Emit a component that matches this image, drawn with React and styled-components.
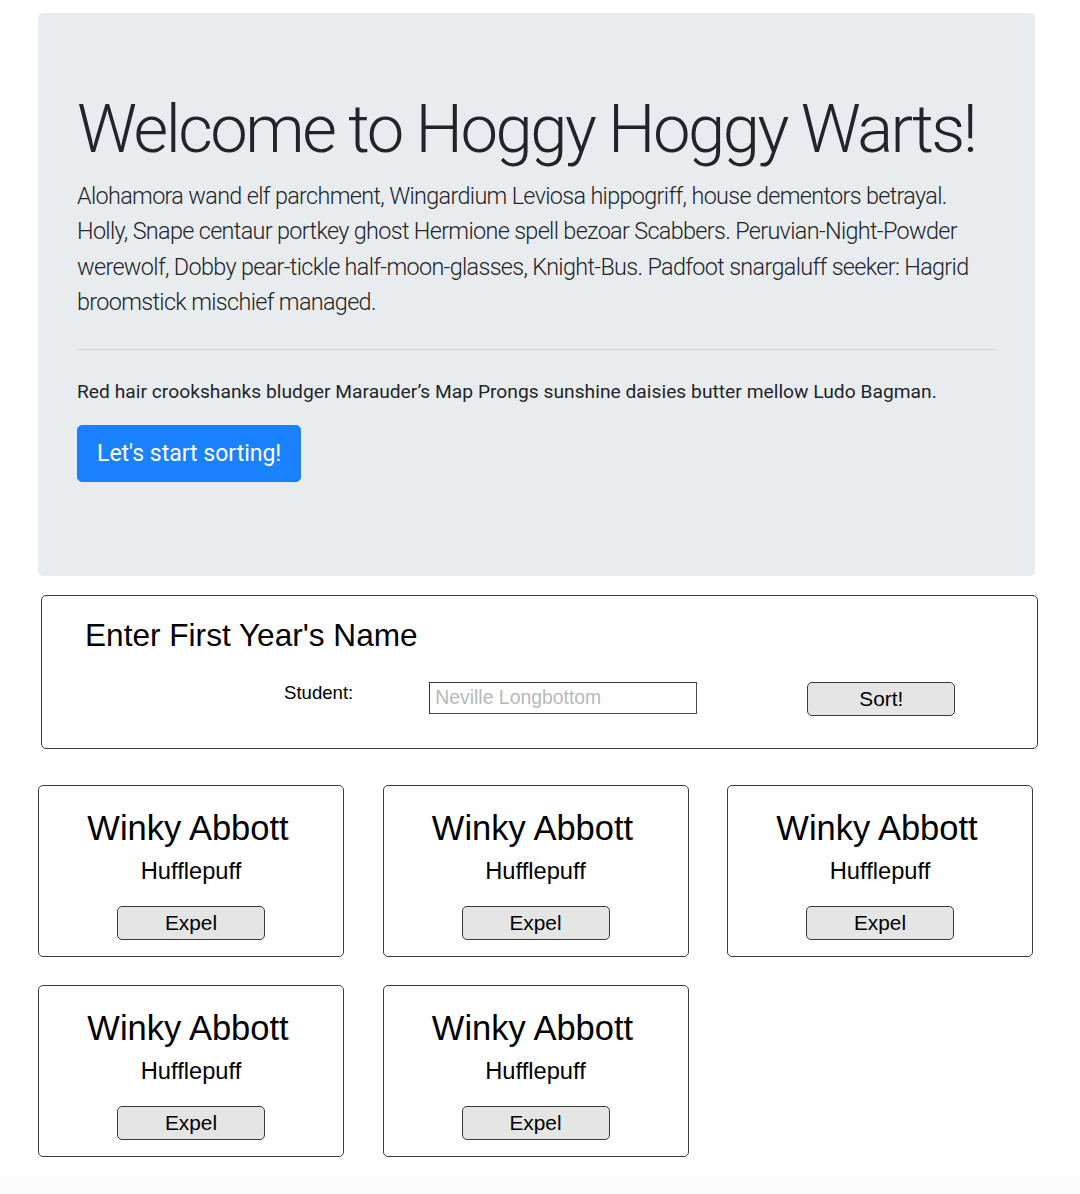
import React from "react";
import styled, { createGlobalStyle } from "styled-components";

const Global = createGlobalStyle`
  html, body { margin: 0; padding: 0; background: #fff; }
  body { font-family: "Liberation Sans", Arial, sans-serif; color: #000; }
  * { box-sizing: border-box; }
`;

const Page = styled.div`
  padding-top: 13px;
`;

const Jumbotron = styled.section`
  margin: 0 45px 0 38px;
  padding: 76px 39px 94px 39px;
  background: #e9ecef;
  border-radius: 5px;
  font-family: Roboto, Inter, sans-serif;
  color: #212529;
`;

const Title = styled.h1`
  margin: 0 0 9.5px;
  font-size: 67px;
  font-weight: 300;
  line-height: 1.2;
  letter-spacing: -2.5px;
  white-space: nowrap;
`;

const Lead = styled.p`
  margin: 0 0 19px;
  font-size: 23.4px;
  font-weight: 300;
  line-height: 35.5px;
  letter-spacing: -0.66px;
`;

const Rule = styled.hr`
  margin: 28px 0;
  border: 0;
  border-top: 1px solid rgba(0, 0, 0, 0.1);
`;

const Small = styled.p`
  margin: 0 0 19px;
  font-size: 19.2px;
  font-weight: 400;
  line-height: 28.5px;
  letter-spacing: 0.03px;
`;

const PrimaryButton = styled.button`
  display: inline-block;
  padding: 9.5px 19px;
  font-family: Roboto, Inter, sans-serif;
  font-size: 23px;
  font-weight: 400;
  line-height: 35.5px;
  color: #fff;
  background: #1a82ff;
  border: 1px solid #1a82ff;
  border-radius: 5px;
  cursor: pointer;
`;

const FormBox = styled.section`
  margin: 19px 42px 0 41px;
  padding: 21px 43px 32px;
  border: 1px solid #3c3c3c;
  border-radius: 5px;
`;

const FormTitle = styled.h2`
  margin: 0 0 29px;
  font-size: 31.6px;
  font-weight: 400;
  line-height: 36px;
`;

const FormRow = styled.div`
  display: flex;
  align-items: flex-start;
  padding-left: 199px;
`;

const Label = styled.label`
  font-size: 18.6px;
  line-height: 22px;
  margin-right: 76px;
`;

const TextInput = styled.input`
  width: 268px;
  height: 32px;
  margin-right: 110px;
  padding: 2px 5px;
  font-family: "Liberation Sans", Arial, sans-serif;
  font-size: 19.4px;
  border: 1px solid #4a4a4a;
  border-top-color: #333;
  border-left-color: #333;
  border-radius: 0;
  background: #fff;
  &::placeholder { color: #b8b8b8; }
`;

const GreyButton = styled.button`
  width: 148px;
  height: 34px;
  padding: 0;
  font-family: "Liberation Sans", Arial, sans-serif;
  font-size: 20.8px;
  line-height: 32px;
  color: #000;
  background: #e5e5e5;
  border: 1px solid #3a3a3a;
  border-radius: 5px;
  cursor: pointer;
`;

const Grid = styled.div`
  display: grid;
  grid-template-columns: repeat(3, 306px);
  column-gap: 38.5px;
  row-gap: 28px;
  margin: 36px 0 0 38px;
`;

const Card = styled.div`
  height: 172px;
  padding: 22px 0 0;
  border: 1px solid #3c3c3c;
  border-radius: 5px;
  display: flex;
  flex-direction: column;
  align-items: center;
  text-align: center;
`;

const Name = styled.div`
  font-size: 34.5px;
  line-height: 40px;
  margin-bottom: 10px;
  margin-right: 6px;
`;

const House = styled.div`
  font-size: 23.7px;
  line-height: 27px;
  margin-bottom: 21px;
`;

const FooterBand = styled.div`
  margin-top: 19px;
  height: 18px;
  background: #fbfbfb;
`;

const students = Array.from({ length: 5 }, (_, i) => ({
  id: i,
  name: "Winky Abbott",
  house: "Hufflepuff",
}));

export default function App() {
  return (
    <>
      <Global />
      <Page>
        <Jumbotron>
          <Title>Welcome to Hoggy Hoggy Warts!</Title>
          <Lead>
            Alohamora wand elf parchment, Wingardium Leviosa hippogriff, house
            dementors betrayal. Holly, Snape centaur portkey ghost Hermione spell
            bezoar Scabbers. Peruvian-Night-Powder werewolf, Dobby pear-tickle
            half-moon-glasses, Knight-Bus. Padfoot snargaluff seeker: Hagrid
            broomstick mischief managed.
          </Lead>
          <Rule />
          <Small>
            Red hair crookshanks bludger Marauder’s Map Prongs sunshine daisies
            butter mellow Ludo Bagman.
          </Small>
          <PrimaryButton>Let's start sorting!</PrimaryButton>
        </Jumbotron>

        <FormBox>
          <FormTitle>Enter First Year's Name</FormTitle>
          <FormRow>
            <Label htmlFor="student">Student:</Label>
            <TextInput id="student" placeholder="Neville Longbottom" />
            <GreyButton>Sort!</GreyButton>
          </FormRow>
        </FormBox>

        <Grid>
          {students.map((s) => (
            <Card key={s.id}>
              <Name>{s.name}</Name>
              <House>{s.house}</House>
              <GreyButton>Expel</GreyButton>
            </Card>
          ))}
        </Grid>
        <FooterBand />
      </Page>
    </>
  );
}
